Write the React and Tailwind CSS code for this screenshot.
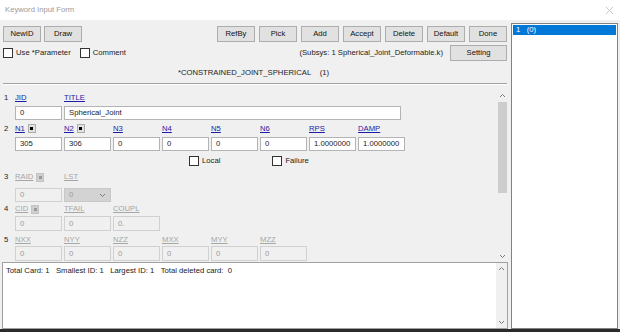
import React from 'react';

const Btn = ({ children, className = '' }) => (
  <div className={`h-[16px] flex items-center justify-center bg-[#e1e1e1] border border-[#adadad] text-[#111] ${className}`}>
    {children}
  </div>
);

const Check = ({ label, className = '' }) => (
  <div className={`flex items-center ${className}`}>
    <div className="w-[10px] h-[10px] border border-[#333] bg-white" />
    <span className="ml-[3px]">{label}</span>
  </div>
);

const Pin = ({ off }) => (
  <div className={`ml-[3px] w-[8px] h-[9px] flex items-center justify-center border ${off ? 'bg-[#cfcfcf] border-[#c4c4c4]' : 'bg-[#e1e1e1] border-[#adadad]'}`}>
    <div className={`w-[3px] h-[3px] ${off ? 'bg-[#9a9a9a]' : 'bg-black'}`} />
  </div>
);

// one column: label on top, box underneath
const Field = ({ label, value, off, pin, w = 'w-[47px]', lh = 'h-[12px]', gap = 'mt-[2px]', ih = 'h-[14px]' }) => (
  <div className={`flex flex-col ${w}`}>
    <div className={`flex items-center ${lh}`}>
      <span className={`underline ${off ? 'text-[#a6a6a6]' : 'text-[#1c1ca8]'}`}>{label}</span>
      {pin && <Pin off={off} />}
    </div>
    <div className={`${gap} ${ih} flex items-center px-[4px] border ${off ? 'bg-[#f0f0f0] border-[#d0d0d0] text-[#9a9a9a]' : 'bg-white border-[#b4b4b4] text-[#222]'}`}>
      {value}
    </div>
  </div>
);

const Up = () => (
  <svg width="7" height="5" viewBox="0 0 7 5"><polyline points="1,4 3.5,1.5 6,4" fill="none" stroke="#7a7a7a" strokeWidth="1" /></svg>
);
const Down = () => (
  <svg width="7" height="5" viewBox="0 0 7 5"><polyline points="1,1 3.5,3.5 6,1" fill="none" stroke="#7a7a7a" strokeWidth="1" /></svg>
);

export default function App() {
  return (
    <div className="w-[620px] h-[332px] flex flex-col bg-[#f0f0f0] overflow-hidden font-['Liberation_Sans',Arial,sans-serif] text-[7.7px] leading-none text-[#222]">
      {/* title bar */}
      <div className="h-[20px] bg-white flex items-center justify-between pl-[5px] pr-[6px]">
        <span className="text-[#9a9a9a]">Keyword Input Form</span>
        <svg width="9" height="9" viewBox="0 0 9 9"><path d="M1 1 L8 8 M8 1 L1 8" stroke="#c8c8c8" strokeWidth="1" /></svg>
      </div>

      <div className="flex-1 flex min-h-0">
        {/* main */}
        <div className="w-[511px] flex flex-col pt-[6px]">
          <div className="flex items-center pl-[3px] pr-[4px]">
            <Btn className="w-[38px]">NewID</Btn>
            <Btn className="w-[38px] ml-[3px]">Draw</Btn>
            <div className="ml-auto flex gap-[4px]">
              {['RefBy', 'Pick', 'Add', 'Accept', 'Delete', 'Default', 'Done'].map((b) => (
                <Btn key={b} className="w-[38px]">{b}</Btn>
              ))}
            </div>
          </div>

          <div className="mt-[2px] h-[17px] flex items-center pl-[3px] pr-[4px]">
            <Check label="Use *Parameter" />
            <Check label="Comment" className="ml-[9px]" />
            <span className="ml-auto mr-[7px]">(Subsys: 1 Spherical_Joint_Deformable.k)</span>
            <Btn className="w-[57px]">Setting</Btn>
          </div>

          <div className="mt-[6px] h-[12px] flex items-center justify-center pr-[4px]">
            *CONSTRAINED_JOINT_SPHERICAL&nbsp;&nbsp;&nbsp;&nbsp;(1)
          </div>

          <div className="mt-[4px] mx-[3px] mr-[4px] border-t border-t-[#a0a0a0] border-b border-b-white" />

          {/* card fields */}
          <div className="h-[177px] flex overflow-hidden">
            <div className="flex-1 flex flex-col pt-[7px]">
              <div className="flex">
                <div className="w-[15px] pl-[4px] h-[12px] flex items-center">1</div>
                <div className="flex gap-[2px]">
                  <Field label="JID" value="0" />
                  <Field label="TITLE" value="Spherical_Joint" w="w-[337px]" />
                </div>
              </div>

              <div className="flex mt-[2px]">
                <div className="w-[15px] pl-[4px] h-[13px] flex items-center">2</div>
                <div className="flex gap-[2px]">
                  <Field label="N1" value="305" pin lh="h-[13px]" />
                  <Field label="N2" value="306" pin lh="h-[13px]" />
                  <Field label="N3" value="0" lh="h-[13px]" />
                  <Field label="N4" value="0" lh="h-[13px]" />
                  <Field label="N5" value="0" lh="h-[13px]" />
                  <Field label="N6" value="0" lh="h-[13px]" />
                  <Field label="RPS" value="1.0000000" lh="h-[13px]" />
                  <Field label="DAMP" value="1.0000000" lh="h-[13px]" />
                </div>
              </div>

              <div className="mt-[4px] h-[12px] flex items-center pl-[189px]">
                <Check label="Local" />
                <Check label="Failure" className="ml-[52px]" />
              </div>

              <div className="flex mt-[4px]">
                <div className="w-[15px] pl-[4px] h-[12px] flex items-center">3</div>
                <div className="flex gap-[2px]">
                  <Field label="RAID" value="0" pin off gap="mt-[5px]" />
                  <div className="flex flex-col w-[47px]">
                    <div className="h-[12px] flex items-center"><span className="underline text-[#a6a6a6]">LST</span></div>
                    <div className="mt-[5px] h-[14px] flex items-center justify-between px-[4px] bg-[#d3d3d3] border border-[#c8c8c8] text-[#9a9a9a]">
                      0
                      <Down />
                    </div>
                  </div>
                </div>
              </div>

              <div className="flex mt-[1px]">
                <div className="w-[15px] pl-[4px] h-[12px] flex items-center">4</div>
                <div className="flex gap-[2px]">
                  <Field label="CID" value="0" pin off gap="mt-[1px]" ih="h-[15px]" />
                  <Field label="TFAIL" value="0" off gap="mt-[1px]" ih="h-[15px]" />
                  <Field label="COUPL" value="0." off gap="mt-[1px]" ih="h-[15px]" />
                </div>
              </div>

              <div className="flex mt-[3px]">
                <div className="w-[15px] pl-[4px] h-[12px] flex items-center">5</div>
                <div className="flex gap-[2px]">
                  {['NXX', 'NYY', 'NZZ', 'MXX', 'MYY', 'MZZ'].map((l) => (
                    <Field key={l} label={l} value="0" off gap="mt-0" ih="h-[15px]" />
                  ))}
                </div>
              </div>
            </div>

            {/* scrollbar */}
            <div className="w-[11px] mr-[3px] mt-[4px] flex flex-col items-center">
              <div className="h-[13px] flex items-center"><Up /></div>
              <div className="w-[9px] h-[91px] bg-[#cdcdcd]" />
              <div className="flex-1" />
              <div className="h-[12px] flex items-center"><Down /></div>
            </div>
          </div>

          {/* message box */}
          <div className="flex-1 ml-[2px] mr-[3px] flex bg-white border border-[#a0a0a0]">
            <div className="flex-1 pl-[3px] pt-[3px] h-[12px] flex items-center">
              Total Card: 1&nbsp;&nbsp;&nbsp;Smallest ID: 1&nbsp;&nbsp;&nbsp;Largest ID: 1&nbsp;&nbsp;&nbsp;Total deleted card:&nbsp;&nbsp;0
            </div>
            <div className="w-[11px] bg-[#f0f0f0] flex flex-col items-center justify-between py-[3px]">
              <Up />
              <Down />
            </div>
          </div>
        </div>

        {/* id list */}
        <div className="mt-[3px] w-[107px] bg-white border border-[#828282] p-[1px]">
          <div className="h-[10px] bg-[#0078d7] text-white flex items-center pl-[3px]">1&nbsp;&nbsp;&nbsp;(0)</div>
        </div>
      </div>

      <div className="h-[3px] bg-[#2b2b2b]" />
    </div>
  );
}
